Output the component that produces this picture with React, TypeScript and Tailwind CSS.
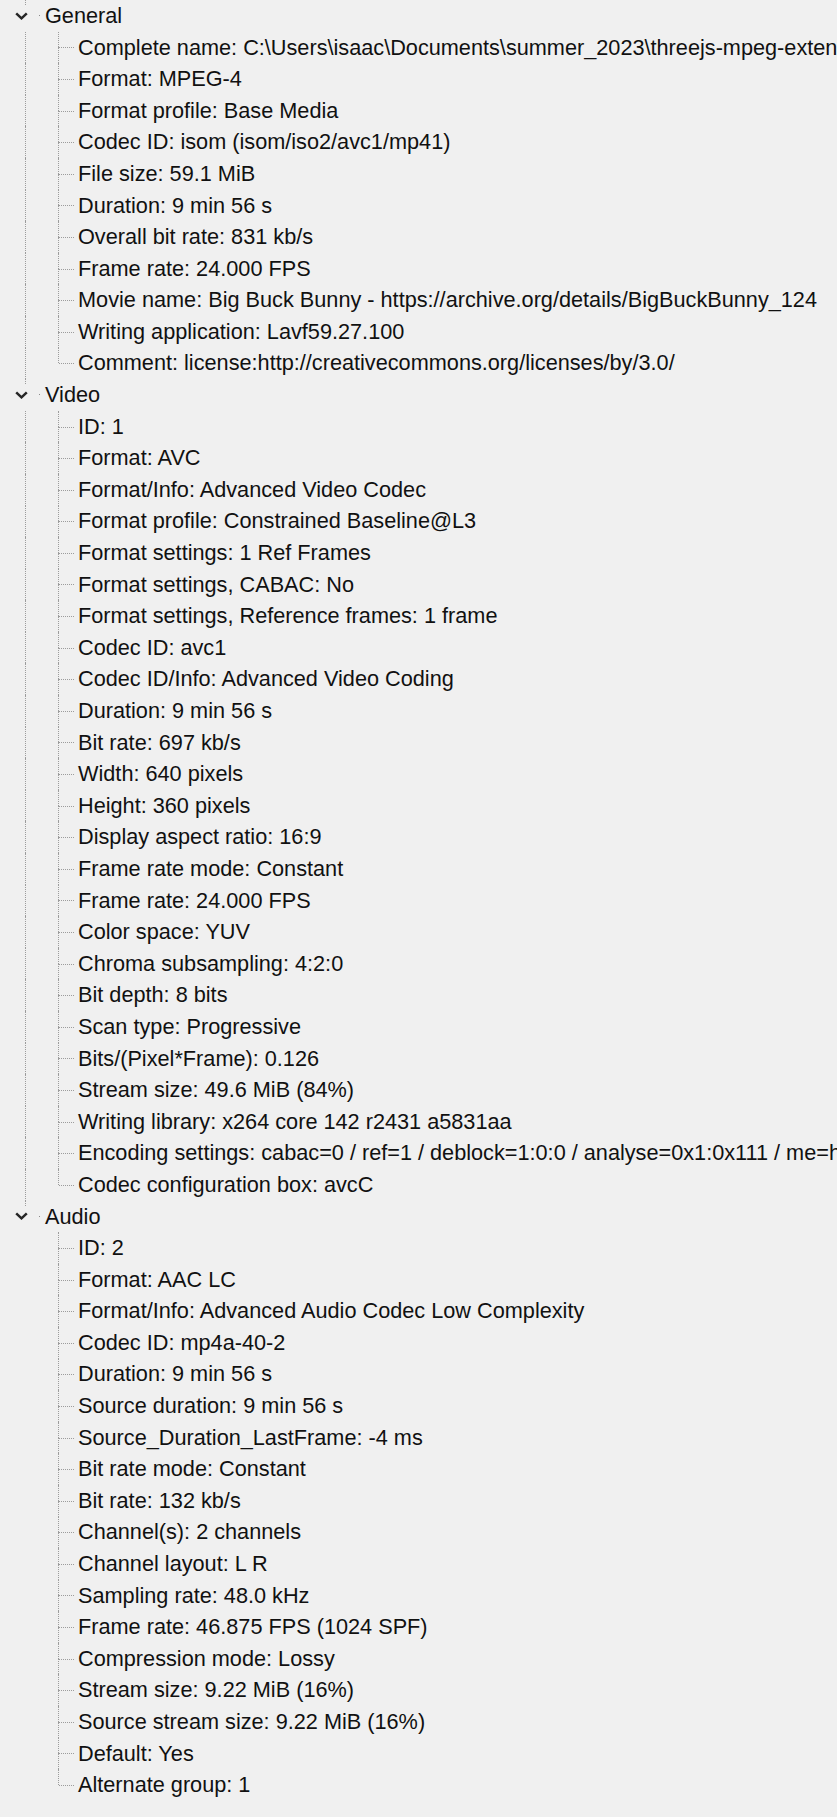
const sections: Array<{ title: string; items: string[] }> = [
  {
    title: 'General',
    items: [
      'Complete name: C:\\Users\\isaac\\Documents\\summer_2023\\threejs-mpeg-extension\\public\\big_buck_bunny.mp4',
      'Format: MPEG-4',
      'Format profile: Base Media',
      'Codec ID: isom (isom/iso2/avc1/mp41)',
      'File size: 59.1 MiB',
      'Duration: 9 min 56 s',
      'Overall bit rate: 831 kb/s',
      'Frame rate: 24.000 FPS',
      'Movie name: Big Buck Bunny - https://archive.org/details/BigBuckBunny_124',
      'Writing application: Lavf59.27.100',
      'Comment: license:http://creativecommons.org/licenses/by/3.0/',
    ],
  },
  {
    title: 'Video',
    items: [
      'ID: 1',
      'Format: AVC',
      'Format/Info: Advanced Video Codec',
      'Format profile: Constrained Baseline@L3',
      'Format settings: 1 Ref Frames',
      'Format settings, CABAC: No',
      'Format settings, Reference frames: 1 frame',
      'Codec ID: avc1',
      'Codec ID/Info: Advanced Video Coding',
      'Duration: 9 min 56 s',
      'Bit rate: 697 kb/s',
      'Width: 640 pixels',
      'Height: 360 pixels',
      'Display aspect ratio: 16:9',
      'Frame rate mode: Constant',
      'Frame rate: 24.000 FPS',
      'Color space: YUV',
      'Chroma subsampling: 4:2:0',
      'Bit depth: 8 bits',
      'Scan type: Progressive',
      'Bits/(Pixel*Frame): 0.126',
      'Stream size: 49.6 MiB (84%)',
      'Writing library: x264 core 142 r2431 a5831aa',
      'Encoding settings: cabac=0 / ref=1 / deblock=1:0:0 / analyse=0x1:0x111 / me=hex / subme=6',
      'Codec configuration box: avcC',
    ],
  },
  {
    title: 'Audio',
    items: [
      'ID: 2',
      'Format: AAC LC',
      'Format/Info: Advanced Audio Codec Low Complexity',
      'Codec ID: mp4a-40-2',
      'Duration: 9 min 56 s',
      'Source duration: 9 min 56 s',
      'Source_Duration_LastFrame: -4 ms',
      'Bit rate mode: Constant',
      'Bit rate: 132 kb/s',
      'Channel(s): 2 channels',
      'Channel layout: L R',
      'Sampling rate: 48.0 kHz',
      'Frame rate: 46.875 FPS (1024 SPF)',
      'Compression mode: Lossy',
      'Stream size: 9.22 MiB (16%)',
      'Source stream size: 9.22 MiB (16%)',
      'Default: Yes',
      'Alternate group: 1',
    ],
  },
];

// tree guide lines (dotted, like the win32 treeview)
const dot = 'border-l border-dotted border-[#9c9c9c]';

function Chevron() {
  return (
    <svg width="13" height="8" viewBox="0 0 13 8" className="shrink-0">
      <path d="M1.2 1.3 L6.5 6.3 L11.8 1.3" fill="none" stroke="#262626" strokeWidth="2.5" />
    </svg>
  );
}

function HeaderRow({ title }: { title: string }) {
  return (
    <div className="flex h-[31.6px] items-center">
      <div className="relative flex h-full w-[42px] shrink-0 items-center">
        {/* stub of the root guide above the expander */}
        <div className={`absolute left-[25px] top-0 h-[5px] ${dot}`} />
        <div className="ml-[15px]">
          <Chevron />
        </div>
        <div className="ml-[11px] h-px w-px bg-[#8a8a8a]" />
      </div>
      <span className="pl-[3px]">{title}</span>
    </div>
  );
}

function ItemRow({ text, last, rootLine }: { text: string; last: boolean; rootLine: boolean }) {
  return (
    <div className="flex h-[31.6px] items-center">
      <div className="flex h-full w-[58px] shrink-0">
        <div className="w-[25px] shrink-0" />
        {rootLine && <div className={`h-full ${dot}`} />}
      </div>
      <div className="flex h-full w-[20px] shrink-0 flex-col">
        <div className={`flex h-1/2 items-end ${dot}`}>
          <div className="mb-[-1px] h-0 w-[15px] border-t border-dotted border-[#9c9c9c]" />
        </div>
        {!last && <div className={`h-1/2 ${dot}`} />}
      </div>
      <span className="whitespace-nowrap">{text}</span>
    </div>
  );
}

export default function App() {
  return (
    <div className="h-[1817px] w-[837px] overflow-hidden bg-[#f0f0f0] text-[21.7px] leading-none text-[#111] [font-family:'Liberation_Sans',Arial,sans-serif]">
      {sections.map((s, si) => (
        <div key={s.title}>
          <HeaderRow title={s.title} />
          {s.items.map((it, i) => (
            <ItemRow key={i} text={it} last={i === s.items.length - 1} rootLine={si < sections.length - 1} />
          ))}
        </div>
      ))}
    </div>
  );
}
